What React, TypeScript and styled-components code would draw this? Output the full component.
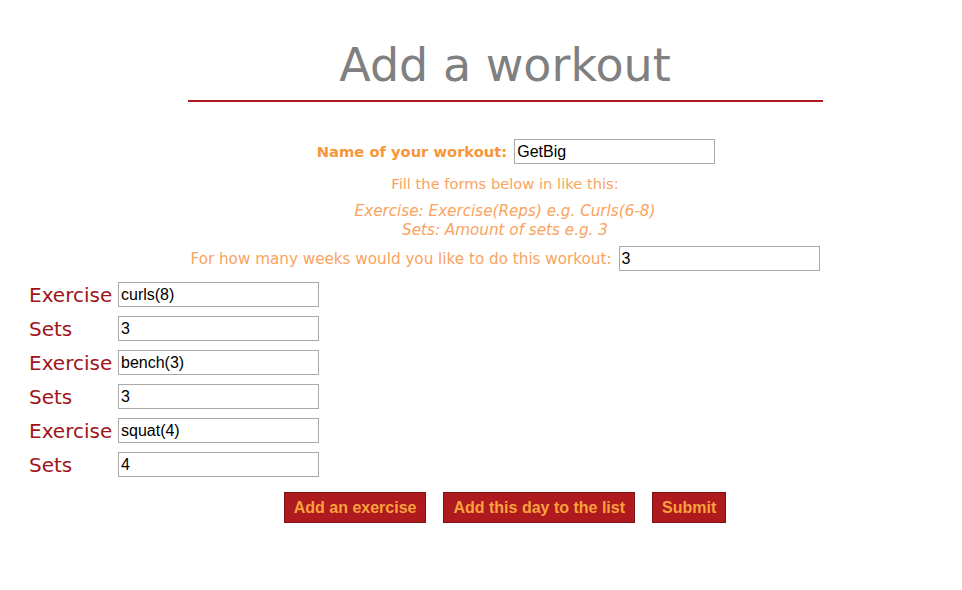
import styled, { createGlobalStyle } from "styled-components";

const GlobalStyle = createGlobalStyle`
    body {
        margin: 0;
        background: #ffffff;
        font-family: "DejaVu Sans", Verdana, sans-serif;
    }
`;

const Page = styled.div`
    display: flex;
    flex-direction: column;
    padding-top: 38px;
`;

const Top = styled.div`
    display: flex;
    flex-direction: column;
    align-items: center;
    padding-left: 48px;
`;

const Title = styled.h1`
    width: 635px;
    margin: 0;
    padding-bottom: 8px;
    border-bottom: 2px solid #ad1a1f;
    font-size: 46px;
    font-weight: normal;
    line-height: 54px;
    color: #808080;
    text-align: center;
`;

const Row = styled.div<{ $top: number; $shift?: number }>`
    display: flex;
    align-items: center;
    gap: 7px;
    margin-top: ${(p) => p.$top}px;
    margin-left: ${(p) => p.$shift ?? 0}px;
`;

const Label = styled.label<{ $bold?: boolean; $size: number }>`
    font-size: ${(p) => p.$size}px;
    color: ${(p) => (p.$bold ? "#f7963a" : "#f9a35e")};
    font-weight: ${(p) => (p.$bold ? "bold" : "normal")};
`;

const TextInput = styled.input`
    box-sizing: border-box;
    width: 201px;
    height: 25px;
    padding: 1px 2px;
    border: 1px solid #a9a9a9;
    font-family: "Liberation Sans", Arial, sans-serif;
    font-size: 16px;
    color: #000;
    outline: none;
`;

const Hint = styled.p<{ $italic?: boolean; $top: number; $size: number }>`
    margin: ${(p) => p.$top}px 0 0;
    font-size: ${(p) => p.$size}px;
    line-height: 19px;
    color: #f9a35e;
    font-style: ${(p) => (p.$italic ? "italic" : "normal")};
    text-align: center;
`;

const Exercises = styled.div`
    display: flex;
    flex-direction: column;
    gap: 9px;
    margin-top: 11px;
    padding-left: 29px;
`;

const ExerciseRow = styled.div`
    display: grid;
    grid-template-columns: 89px 201px;
    align-items: center;
`;

const ExerciseLabel = styled.label`
    font-size: 20px;
    color: #a0141a;
`;

const Buttons = styled.div`
    display: flex;
    justify-content: center;
    gap: 17px;
    margin-top: 15px;
    padding-left: 48px;
`;

const Button = styled.button`
    box-sizing: border-box;
    height: 31px;
    padding: 0 9px;
    background: #ae1a1e;
    border: 1px solid #7d1015;
    color: #f9a23c;
    font-family: "Liberation Sans", Arial, sans-serif;
    font-weight: bold;
    font-size: 16px;
    cursor: pointer;
`;

const exercises = [
    { label: "Exercise", value: "curls(8)" },
    { label: "Sets", value: "3" },
    { label: "Exercise", value: "bench(3)" },
    { label: "Sets", value: "3" },
    { label: "Exercise", value: "squat(4)" },
    { label: "Sets", value: "4" },
];

export default function App() {
    return (
        <Page>
            <GlobalStyle />
            <Top>
                <Title>Add a workout</Title>
                <Row $top={37} $shift={22}>
                    <Label $bold $size={14.7} htmlFor="name">Name of your workout:</Label>
                    <TextInput id="name" defaultValue="GetBig" />
                </Row>
                <Hint $top={10} $size={14.7}>Fill the forms below in like this:</Hint>
                <Hint $italic $top={9} $size={15.2}>
                    Exercise: Exercise(Reps) e.g. Curls(6-8)
                    <br />
                    Sets: Amount of sets e.g. 3
                </Hint>
                <Row $top={6}>
                    <Label $size={15.2} htmlFor="weeks">For how many weeks would you like to do this workout:</Label>
                    <TextInput id="weeks" defaultValue="3" />
                </Row>
            </Top>
            <Exercises>
                {exercises.map((ex, i) => (
                    <ExerciseRow key={i}>
                        <ExerciseLabel>{ex.label}</ExerciseLabel>
                        <TextInput defaultValue={ex.value} />
                    </ExerciseRow>
                ))}
            </Exercises>
            <Buttons>
                <Button>Add an exercise</Button>
                <Button>Add this day to the list</Button>
                <Button>Submit</Button>
            </Buttons>
        </Page>
    );
}
